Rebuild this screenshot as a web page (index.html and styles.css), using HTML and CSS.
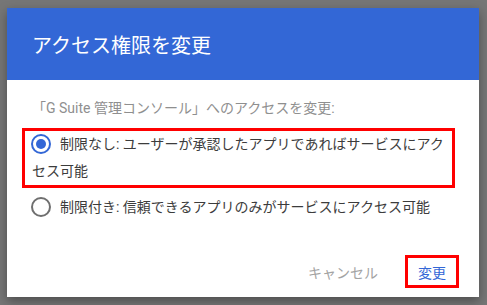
FILE: index.html
```html
<!DOCTYPE html>
<html lang="ja">
<head>
  <meta charset="UTF-8" />
  <meta name="viewport" content="width=device-width, initial-scale=1.0" />
  <title>アクセス権限を変更</title>
  <link rel="stylesheet" href="styles.css">
</head>
<body>
  <div class="dialog">
    <div class="dialog-header">
      <h2>アクセス権限を変更</h2>
    </div>
    <div class="dialog-body">
      <p class="subtitle">「G Suite 管理コンソール」へのアクセスを変更:</p>
      <label class="option marked">
        <span class="radio checked"></span>制限なし: ユーザーが承認したアプリであればサービスにアクセス可能
      </label>
      <label class="option">
        <span class="radio"></span>制限付き: 信頼できるアプリのみがサービスにアクセス可能
      </label>
    </div>
    <div class="dialog-actions">
      <button class="btn btn-cancel">キャンセル</button>
      <button class="btn btn-ok marked">変更</button>
    </div>
  </div>
</body>
</html>
```

FILE: styles.css
```css
body {
  margin: 0;
  padding: 8px 8px 8px 7px;
  background: #767676;
  font-family: Roboto, "Noto Sans CJK JP", sans-serif;
}
.dialog {
  width: 472px;
  height: 289px;
  background: #ffffff;
  box-shadow: 0 4px 10px rgba(0, 0, 0, 0.35);
  display: flex;
  flex-direction: column;
}
.dialog-header {
  height: 72px;
  background: #3367d6;
  padding: 0 25px;
  display: flex;
  align-items: center;
}
.dialog-header h2 {
  margin: 0;
  font-size: 20px;
  font-weight: 400;
  color: #ffffff;
}
.dialog-body {
  flex: 1;
  padding: 18px 25px 0 25px;
}
.subtitle {
  margin: 0 0 10px;
  font-size: 14px;
  line-height: 20px;
  color: #8f8f8f;
}
.option {
  display: block;
  margin: 0 -1px 0 -10px;
  padding: 0 0 0 7px;
  border: 3px solid transparent;
  font-size: 14px;
  line-height: 27px;
  color: #3c3c3c;
}
.option + .option {
  margin-top: 3px;
}
.marked {
  border: 3px solid #ff0000;
}
.radio {
  display: inline-block;
  box-sizing: border-box;
  width: 20px;
  height: 20px;
  margin: 0 9px 0 -1px;
  border: 2px solid #6f6f6f;
  border-radius: 50%;
  vertical-align: -5px;
  position: relative;
}
.radio.checked {
  border-color: #3367d6;
}
.radio.checked::after {
  content: "";
  position: absolute;
  left: 3px;
  top: 3px;
  width: 10px;
  height: 10px;
  border-radius: 50%;
  background: #3367d6;
}
.dialog-actions {
  display: flex;
  justify-content: flex-end;
  align-items: center;
  gap: 14px;
  padding: 0 20px 9px 0;
}
.btn {
  height: 33px;
  padding: 0 10px;
  border: 3px solid transparent;
  background: none;
  font-family: inherit;
  font-size: 14px;
  cursor: pointer;
}
.btn-cancel {
  color: #a3a3a3;
}
.btn-ok {
  color: #3367d6;
  border-color: #ff0000;
}
```
